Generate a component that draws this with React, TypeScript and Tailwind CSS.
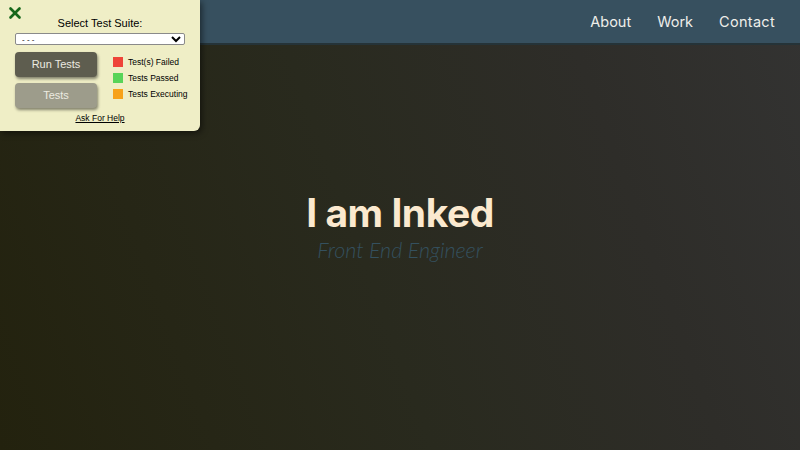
import { X } from "lucide-react";

const Legend = ({ color, label }: { color: string; label: string }) => (
   <div className="flex items-center gap-[5px] whitespace-nowrap">
      <div className={`w-[10px] h-[10px] shrink-0 ${color}`} />
      <div>{label}</div>
   </div>
);

const TestPanel = () => {
   return (
      <div className="absolute left-0 top-0 w-[200px] h-[131px] bg-[#efeec6] rounded-br-md shadow-[2px_2px_6px_rgba(0,0,0,0.5)] font-['Liberation_Sans',Arial,sans-serif] text-black">
         <X className="absolute left-[6px] top-[4px] text-[#16671a]" size={18} strokeWidth={3.5} />
         <div className="pt-[16px] text-center text-[11px] leading-[14px]">Select Test Suite:</div>
         <div className="px-[15px] mt-[3px]">
            <select className="block w-full h-[12px] p-0 pl-[2px] text-[8px] leading-none bg-white border border-[#8a8a8a] rounded-[2px]">
               <option>- - -</option>
            </select>
         </div>

         <div className="flex pl-[15px] mt-[7px] gap-[16px]">
            {/*buttons*/}
            <div className="flex flex-col gap-[6px]">
               <button className="w-[82px] h-[25px] rounded-[4px] bg-[#5e5d4f] text-[#ecebe0] text-[11px] shadow-[1px_2px_3px_rgba(0,0,0,0.45)]">Run Tests</button>
               <button className="w-[82px] h-[25px] rounded-[4px] bg-[#9d9c8b] text-[#ecebe0] text-[11px] shadow-[1px_2px_3px_rgba(0,0,0,0.45)]">Tests</button>
            </div>

            {/*legend*/}
            <div className="flex flex-col gap-[6px] pt-[5px] text-[8.5px] leading-[10px]">
               <Legend color="bg-[#ee4438]" label="Test(s) Failed" />
               <Legend color="bg-[#58d458]" label="Tests Passed" />
               <Legend color="bg-[#f7a21a]" label="Tests Executing" />
            </div>
         </div>

         <div className="text-center text-[8.5px] leading-[10px] mt-[5px] underline">Ask For Help</div>
      </div>
   );
};

export default function App() {
   return (
      <div className="relative w-[800px] h-[450px] overflow-hidden bg-[linear-gradient(70deg,#23220e_0%,#292a1e_45%,#2e2d29_75%,#333332_100%)]">
         {/*header*/}
         <div className="h-[45px] bg-[#37505f] border-b-2 border-[#253338] flex justify-end items-center pr-[25px] gap-[26px] font-['Inter',sans-serif] text-[14.5px] text-[#eeeeea]">
            <a className="pt-[1px]">About</a>
            <a className="pt-[1px]">Work</a>
            <a className="pt-[1px] tracking-[0.3px]">Contact</a>
         </div>

         {/*hero*/}
         <div className="flex flex-col items-center pt-[145px]">
            <h1 className="text-[39px] leading-[46px] font-bold text-[#fbe9cf] font-['Inter',sans-serif] tracking-[-0.5px]">I am Inked</h1>
            <div className="text-[21.5px] leading-[26px] italic font-light text-[#34505e] font-['Lato',sans-serif] mt-[1px]">Front End Engineer</div>
         </div>

         <TestPanel />
      </div>
   );
}
